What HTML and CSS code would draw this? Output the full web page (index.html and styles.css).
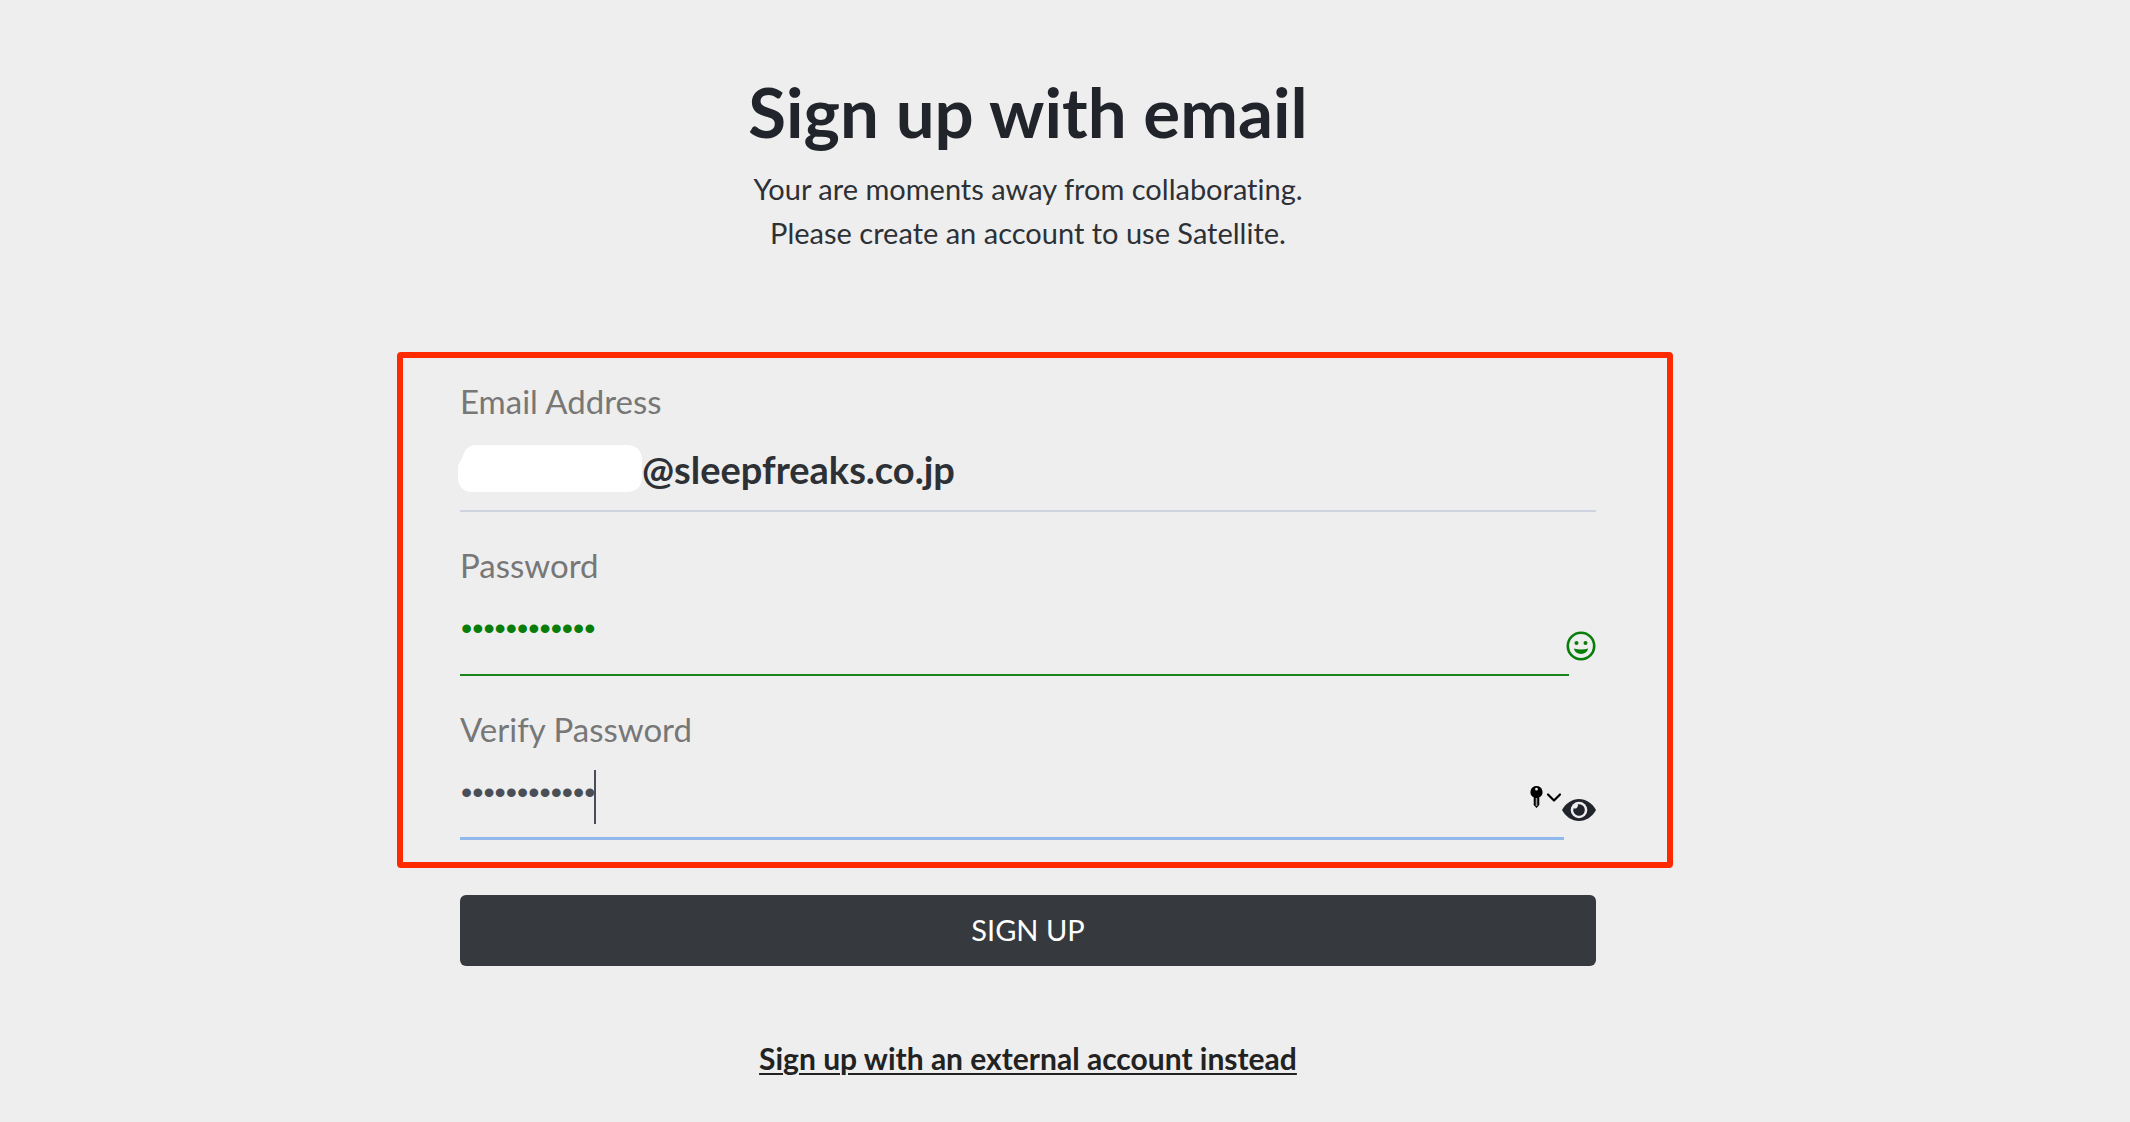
FILE: index.html
```html
<!DOCTYPE html>
<html lang="en">
<head>
    <meta charset="UTF-8">
    <meta name="viewport" content="width=device-width, initial-scale=1.0">
    <title>Sign up with email</title>
    <link rel="stylesheet" href="styles.css">
</head>
<body>
    <main class="container">
        <h1>Sign up with email</h1>
        <p class="intro">Your are moments away from collaborating.<br>Please create an account to use Satellite.</p>
        <form class="signup">
            <div class="fields">
                <div class="field">
                    <label for="email">Email Address</label>
                    <div class="control email">
                        <svg class="mask" viewBox="0 0 184 47" aria-hidden="true">
                            <path fill="#fff" d="M18 0H168Q184 0 184 16V31Q184 47 168 47H15Q0 47 0 31V23Q0 18 4 14Q7 0 18 0Z"/>
                        </svg>
                        <input type="text" id="email" value="@sleepfreaks.co.jp">
                    </div>
                </div>
                <div class="field">
                    <label for="password">Password</label>
                    <div class="control">
                        <input type="password" id="password" class="valid" value="satellite123">
                        <svg class="smile" viewBox="0 0 30 30" aria-hidden="true">
                            <circle cx="15" cy="15" r="13.2" fill="none" stroke="#087d08" stroke-width="2.6"/>
                            <circle cx="10.5" cy="12" r="2" fill="#087d08"/>
                            <circle cx="19.5" cy="12" r="2" fill="#087d08"/>
                            <path fill="#087d08" d="M7.8 17.6Q15 19.5 22.2 17.6Q20.8 23 15 23Q9.2 23 7.8 17.6Z"/>
                        </svg>
                    </div>
                </div>
                <div class="field">
                    <label for="verify">Verify Password</label>
                    <div class="control">
                        <div class="focused">
                            <input type="password" id="verify" value="satellite123">
                            <span class="caret"></span>
                            <svg class="key" viewBox="0 0 32 24" aria-hidden="true">
                                <path fill="#000" fill-rule="evenodd" d="M6.5 1A6 6 0 0 1 9.3 12.3V20L6.5 23L3.7 20V12.3A6 6 0 0 1 6.5 1ZM6.5 2.8A1.4 1.4 0 1 0 6.5 5.6A1.4 1.4 0 1 0 6.5 2.8Z"/>
                                <path fill="none" stroke="#999" stroke-width="1.6" d="M6.5 13V21"/>
                                <path fill="none" stroke="#000" stroke-width="2.2" stroke-linecap="round" stroke-linejoin="round" d="M18 9.500L24 15.500L30 9.500"/>
                            </svg>
                        </div>
                        <button type="button" class="toggle" aria-label="Show password">
                            <svg viewBox="0 0 34 22">
                                <path fill="#22242b" d="M0 11C4 4 10 0 17 0S30 4 34 11C30 18 24 22 17 22S4 18 0 11Z"/>
                                <circle cx="17" cy="11" r="8.3" fill="#eee"/>
                                <path fill="#22242b" d="M17 5.2A5.800 5.800 0 1 1 11.5 9.3A3.200 3.200 0 0 0 15.8 5.3Q16.4 5.2 17 5.2Z"/>
                            </svg>
                        </button>
                    </div>
                </div>
            </div>
            <button type="submit" class="submit">SIGN UP</button>
        </form>
        <a href="#" class="external">Sign up with an external account instead</a>
    </main>
</body>
</html>
```
FILE: styles.css
```css
* {
    box-sizing: border-box;
}

body {
    margin: 0;
    padding: 72px 74px 0 0;
    background-color: #eee;
    color: #2d3136;
    font-family: Lato, sans-serif;
    font-variant-ligatures: none;
}

.container {
    max-width: 1136px;
    margin: 0 auto;
    text-align: center;
}

h1 {
    margin: 0;
    color: #22242b;
    font-size: 69px;
    line-height: 80px;
}

.intro {
    margin: 15px 0 97px;
    font-size: 29px;
    line-height: 44px;
}

.fields {
    margin: 0 -77px 0 -63px;
    padding: 23px 71px 22px 57px;
    border: 6px solid #ff2a00;
    border-radius: 4px;
    text-align: left;
}

.field + .field {
    margin-top: 33px;
}

label {
    display: block;
    color: #777;
    font-size: 33px;
    line-height: 40px;
}

.control {
    display: flex;
    height: 91px;
}

input {
    flex: 1;
    width: 100%;
    min-width: 0;
    height: 91px;
    padding: 0 0 2px 1px;
    border: 0;
    border-bottom: 2px solid #cfd3df;
    border-radius: 0;
    outline: 0;
    background: transparent;
    color: #4a4f57;
    font-family: "Liberation Sans", sans-serif;
    font-size: 32px;
}

.email {
    align-items: center;
    padding-top: 6px;
    border-bottom: 2px solid #cfd3df;
}

.email input {
    height: 48px;
    padding: 0;
    border: 0;
    color: #2d3136;
    font-family: Lato, sans-serif;
    font-size: 38px;
    font-weight: bold;
}

.mask {
    width: 184px;
    height: 47px;
    margin-left: -2px;
}

.valid {
    border-color: #1b831b;
    color: #087d08;
}

.smile {
    width: 30px;
    height: 30px;
    margin: 46px 0 0 -3px;
}

.focused {
    position: relative;
    flex: 1;
}

.focused input {
    border-bottom: 3px solid #92b9ed;
}

.caret {
    position: absolute;
    top: 21px;
    left: 134px;
    width: 2px;
    height: 54px;
    background-color: #4a4f57;
}

.key {
    position: absolute;
    top: 36px;
    right: 2px;
    width: 32px;
    height: 24px;
}

.toggle {
    width: 34px;
    height: 22px;
    margin: 50px 0 0 -2px;
    padding: 0;
    border: 0;
    background: transparent;
    cursor: pointer;
}

.toggle svg {
    display: block;
}

.submit {
    width: 100%;
    height: 71px;
    margin-top: 27px;
    padding: 0 0 2px;
    border: 0;
    border-radius: 6px;
    background-color: #363a3f;
    color: white;
    font-family: Lato, sans-serif;
    font-size: 29px;
    cursor: pointer;
}

.external {
    display: inline-block;
    margin-top: 70px;
    color: #222;
    font-size: 30px;
    font-weight: bold;
    line-height: 44px;
    text-underline-offset: 3px;
    text-decoration-thickness: 2px;
}
```
